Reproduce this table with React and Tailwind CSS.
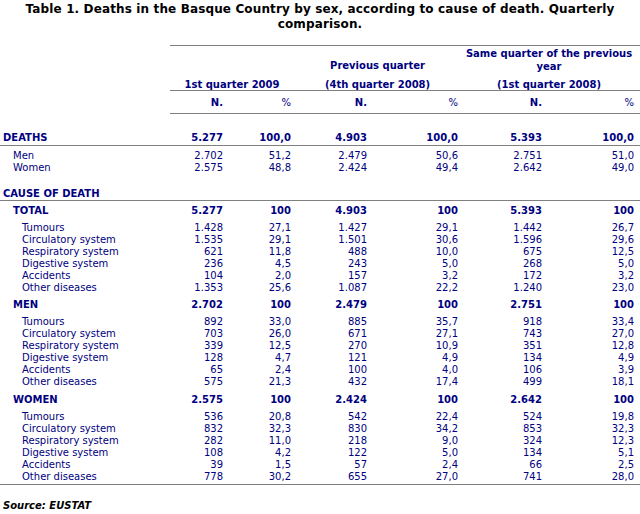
import React from "react";

const COLS = "grid grid-cols-[170px_56px_68px_76px_91px_84px_92px]";
const NUMS = "grid grid-cols-[56px_68px_76px_91px_84px_92px]";

const deaths = {
  total: ["5.277", "100,0", "4.903", "100,0", "5.393", "100,0"],
  rows: [
    ["Men", "2.702", "51,2", "2.479", "50,6", "2.751", "51,0"],
    ["Women", "2.575", "48,8", "2.424", "49,4", "2.642", "49,0"],
  ],
};

const groups = [
  {
    name: "TOTAL",
    total: ["5.277", "100", "4.903", "100", "5.393", "100"],
    rows: [
      ["Tumours", "1.428", "27,1", "1.427", "29,1", "1.442", "26,7"],
      ["Circulatory system", "1.535", "29,1", "1.501", "30,6", "1.596", "29,6"],
      ["Respiratory system", "621", "11,8", "488", "10,0", "675", "12,5"],
      ["Digestive system", "236", "4,5", "243", "5,0", "268", "5,0"],
      ["Accidents", "104", "2,0", "157", "3,2", "172", "3,2"],
      ["Other diseases", "1.353", "25,6", "1.087", "22,2", "1.240", "23,0"],
    ],
  },
  {
    name: "MEN",
    total: ["2.702", "100", "2.479", "100", "2.751", "100"],
    rows: [
      ["Tumours", "892", "33,0", "885", "35,7", "918", "33,4"],
      ["Circulatory system", "703", "26,0", "671", "27,1", "743", "27,0"],
      ["Respiratory system", "339", "12,5", "270", "10,9", "351", "12,8"],
      ["Digestive system", "128", "4,7", "121", "4,9", "134", "4,9"],
      ["Accidents", "65", "2,4", "100", "4,0", "106", "3,9"],
      ["Other diseases", "575", "21,3", "432", "17,4", "499", "18,1"],
    ],
  },
  {
    name: "WOMEN",
    total: ["2.575", "100", "2.424", "100", "2.642", "100"],
    rows: [
      ["Tumours", "536", "20,8", "542", "22,4", "524", "19,8"],
      ["Circulatory system", "832", "32,3", "830", "34,2", "853", "32,3"],
      ["Respiratory system", "282", "11,0", "218", "9,0", "324", "12,3"],
      ["Digestive system", "108", "4,2", "122", "5,0", "134", "5,1"],
      ["Accidents", "39", "1,5", "57", "2,4", "66", "2,5"],
      ["Other diseases", "778", "30,2", "655", "27,0", "741", "28,0"],
    ],
  },
];

function Nums({ values, bold }) {
  return values.map((v, i) => (
    <div key={i} className={"pr-[3px] text-right " + (bold ? "font-bold" : "")}>
      {v}
    </div>
  ));
}

function Row({ label, values, indent, bold, extra = "" }) {
  return (
    <div className={COLS + " h-[12px] leading-[12px] " + extra}>
      <div className={indent + (bold ? " font-bold" : "")}>{label}</div>
      <Nums values={values} bold={bold} />
    </div>
  );
}

export default function App() {
  return (
    <div className="w-[640px] h-[514px] bg-white font-['DejaVu_Sans',sans-serif] text-[10px] text-[#000080] overflow-hidden">
      <div className="pt-[2px] text-center text-[12px] leading-[15px] font-bold tracking-[0.13px] text-black whitespace-nowrap">
        Table 1. Deaths in the Basque Country by sex, according to cause of death. Quarterly
        <br />
        comparison.
      </div>

      <div className="mt-[13px] pl-[170px] font-bold">
        <div className="border-t border-[#808080] grid grid-cols-[124px_167px_1fr] text-center">
          <div className="flex flex-col">
            <div className="h-[27px]" />
            <div className="h-[17px] pt-[6px] leading-[11px] whitespace-nowrap">1st quarter 2009</div>
          </div>
          <div className="flex flex-col">
            <div className="h-[27px] pt-[13px] leading-[13px] whitespace-nowrap">Previous quarter</div>
            <div className="h-[17px] pt-[6px] leading-[11px] whitespace-nowrap">(4th quarter 2008)</div>
          </div>
          <div className="flex flex-col pr-[3px]">
            <div className="h-[27px] pt-[1px] leading-[13px] whitespace-nowrap">
              Same quarter of the previous
              <br />
              year
            </div>
            <div className="h-[17px] pt-[6px] leading-[11px] whitespace-nowrap">(1st quarter 2008)</div>
          </div>
        </div>
        <div className={NUMS + " border-t border-b border-[#808080] h-[24px] items-center"}>
          {["N.", "%", "N.", "%", "N.", "%"].map((h, i) => (
            <div key={i} className={"pr-[3px] text-right " + (h === "%" ? "font-normal" : "")}>
              {h}
            </div>
          ))}
        </div>
      </div>

      <Row
        label="DEATHS"
        values={deaths.total}
        indent="pl-[3px]"
        bold
        extra="mt-[18px] h-[13px] border-b border-[#808080] box-content"
      />
      <div className="mt-[4px]">
        {deaths.rows.map((r) => (
          <Row key={r[0]} label={r[0]} values={r.slice(1)} indent="pl-[13px]" />
        ))}
      </div>

      <div className="mt-[14px] h-[12px] leading-[12px] pl-[3px] font-bold border-b border-[#808080] box-content">
        CAUSE OF DEATH
      </div>

      <div className="pb-[1px] border-b border-[#808080]">
        {groups.map((g, gi) => (
          <div key={g.name} className={gi === 0 ? "mt-[4px]" : gi === 1 ? "mt-[5px]" : "mt-[6px]"}>
            <Row label={g.name} values={g.total} indent="pl-[13px]" bold />
            <div className="mt-[5px]">
              {g.rows.map((r) => (
                <Row key={r[0]} label={r[0]} values={r.slice(1)} indent="pl-[22px]" />
              ))}
            </div>
          </div>
        ))}
      </div>

      <div className="mt-[15px] pl-[3px] leading-[12px] font-bold italic text-black">Source: EUSTAT</div>
    </div>
  );
}
